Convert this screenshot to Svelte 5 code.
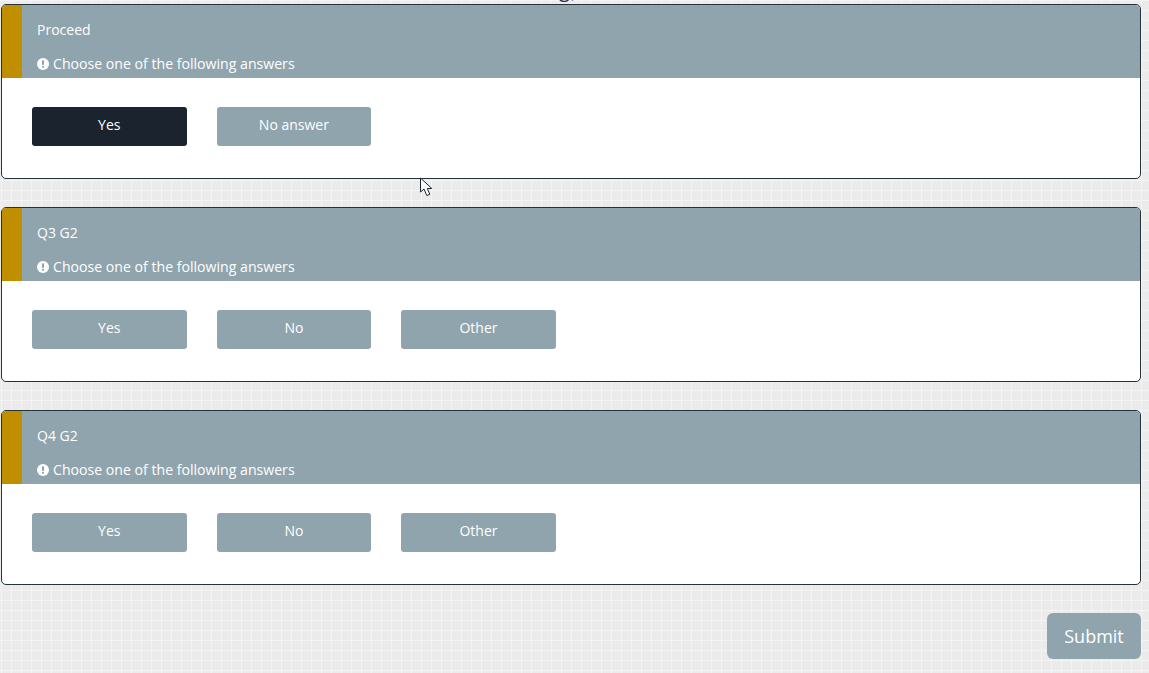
<script>
  const questions = [
    { title: 'Proceed', answers: ['Yes', 'No answer'], selected: 'Yes' },
    { title: 'Q3 G2', answers: ['Yes', 'No', 'Other'] },
    { title: 'Q4 G2', answers: ['Yes', 'No', 'Other'] }
  ];
</script>

<main class="page">
  <p class="clipped">g)</p>
  {#each questions as q}
    <section class="card">
      <header class="head">
        <p class="title">{q.title}</p>
        <p class="hint">
          <svg class="info" viewBox="0 0 12 12" aria-hidden="true">
            <circle cx="6" cy="6" r="6" fill="#fff" />
            <rect x="5" y="2.3" width="2" height="4.7" rx=".7" fill="#90a4ae" />
            <circle cx="6" cy="8.8" r="1.1" fill="#90a4ae" />
          </svg>
          Choose one of the following answers
        </p>
      </header>
      <div class="answers">
        {#each q.answers as a}
          <button class="answer" class:selected={q.selected === a}>{a}</button>
        {/each}
      </div>
    </section>
  {/each}
  <div class="actions">
    <button class="submit">Submit</button>
  </div>
  <svg class="cursor" viewBox="0 0 14 20" aria-hidden="true">
    <path d="M.5 1V15L4 12L6.8 18.5L9.8 17.3L7.3 11.5H11.8Z" fill="#fff" stroke="#1c2733" stroke-width="1" />
  </svg>
</main>

<style>
  :global(body) {
    margin: 0;
    background-color: #ebebeb;
    background-image:
      linear-gradient(#f4f4f4 1px, transparent 1px),
      linear-gradient(90deg, #f4f4f4 1px, transparent 1px);
    background-size: 10px 10px;
    background-position: 1px 0;
    font-family: "Open Sans", "Noto Sans", sans-serif;
  }
  .page {
    position: relative;
    height: 673px;
    box-sizing: border-box;
    padding: 4px 8px 0 1px;
    overflow: hidden;
  }
  .clipped {
    position: absolute;
    left: 559px;
    top: -22px;
    margin: 0;
    font-size: 20px;
    line-height: 24px;
    letter-spacing: 1px;
    color: #263238;
  }
  .card {
    background: #fff;
    border: 1px solid #263238;
    border-radius: 5px;
    overflow: hidden;
    margin-bottom: 28px;
    height: 175px;
    box-sizing: border-box;
  }
  .head {
    height: 73px;
    box-sizing: border-box;
    background: #90a4ae;
    border-left: 20px solid #bf8f00;
    padding-left: 15px;
    color: #fff;
    font-size: 14px;
  }
  .title { margin: 0; padding-top: 15px; line-height: 20px; }
  .hint {
    margin: 14px 0 0;
    line-height: 20px;
    display: flex;
    align-items: center;
    gap: 4px;
    font-size: 14.12px;
  }
  .info { width: 12px; height: 12px; }
  .answers {
    display: flex;
    gap: 30px;
    padding: 29px 0 0 30px;
  }
  .answer {
    width: 154.6px;
    height: 39px;
    border: 0;
    border-radius: 3px;
    background: #90a4ae;
    color: #fff;
    font: 14px "Open Sans", sans-serif;
    padding: 0 0 5px;
  }
  .answer.selected { background: #1a232e; }
  .actions {
    display: flex;
    justify-content: flex-end;
  }
  .submit {
    width: 94px;
    height: 46px;
    border: 0;
    border-radius: 6px;
    background: #90a4ae;
    color: #fff;
    font: 18px "Open Sans", sans-serif;
  }
  .cursor {
    position: absolute;
    left: 420px;
    top: 177px;
    width: 14px;
    height: 20px;
  }
</style>
